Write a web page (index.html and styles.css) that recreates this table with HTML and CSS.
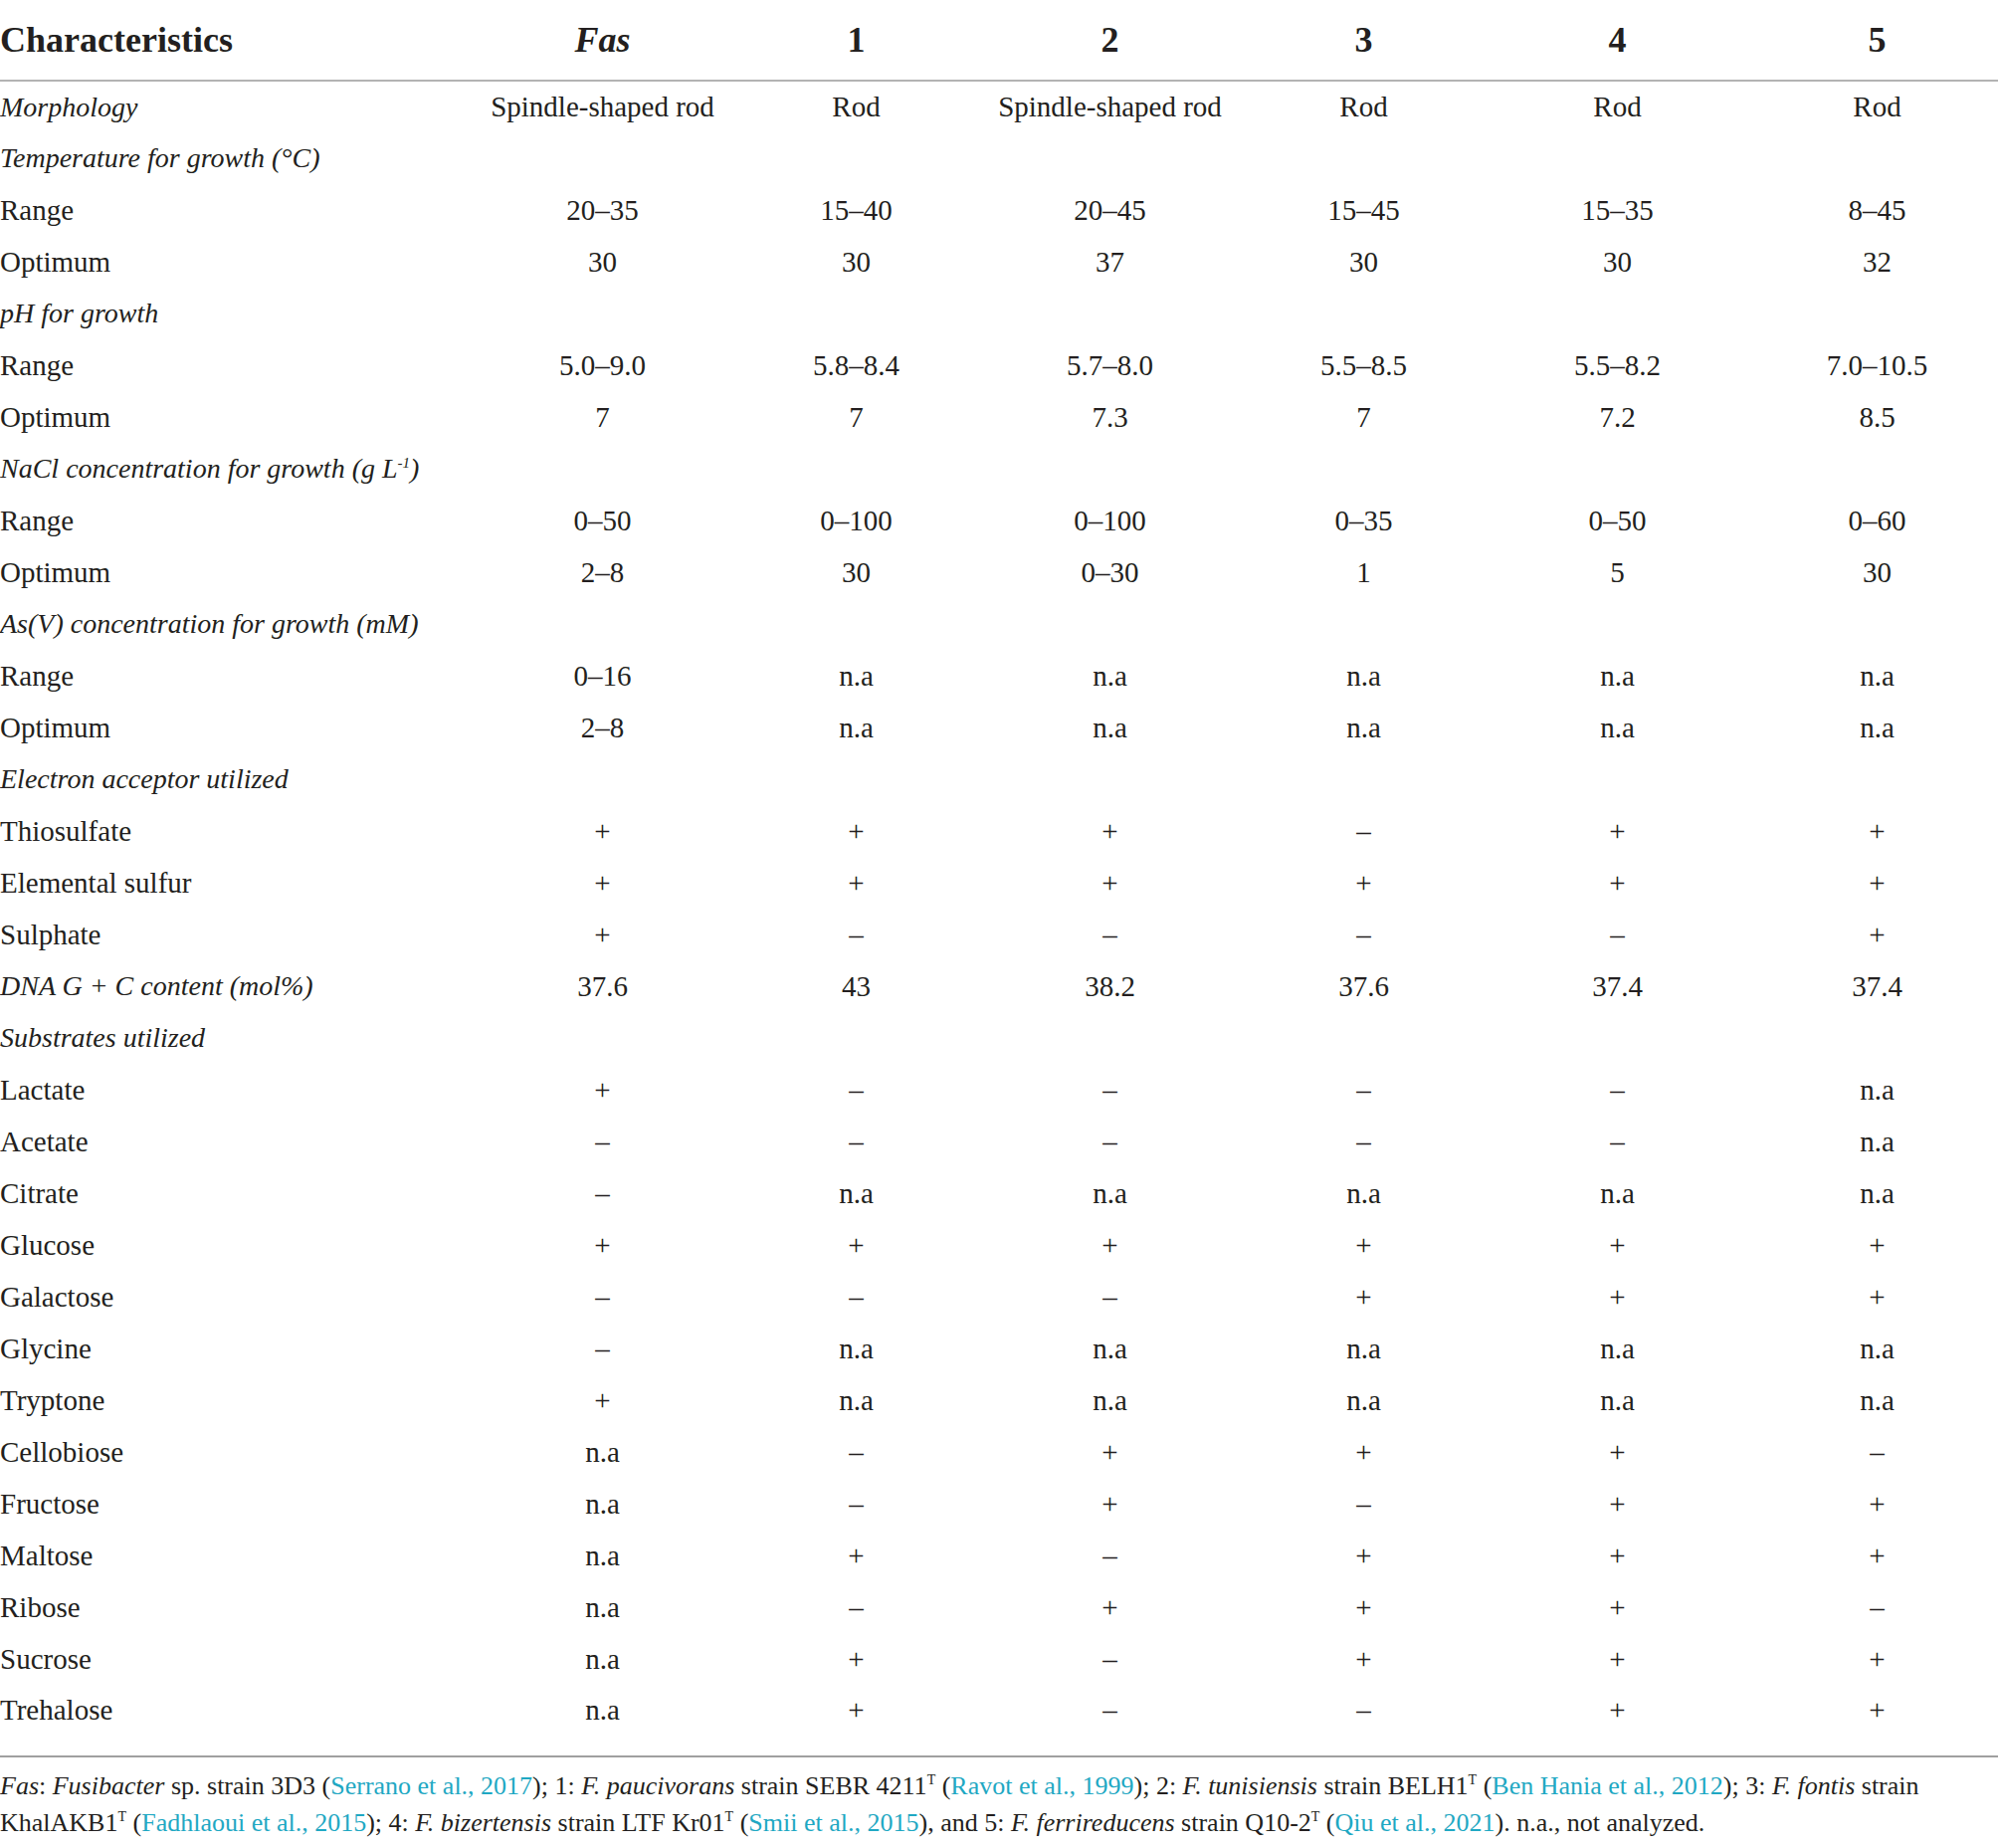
FILE: index.html
```html
<html>
<head>
  <title>Fusibacter characteristics</title>
  <link rel="stylesheet" href="styles.css">
</head>
<body>
  <table class="traits">
    <colgroup>
      <col class="col-label">
      <col class="col-val"><col class="col-val"><col class="col-val">
      <col class="col-val"><col class="col-val"><col class="col-val">
    </colgroup>
    <thead>
      <tr>
        <th class="label">Characteristics</th>
        <th><i>Fas</i></th>
        <th>1</th>
        <th>2</th>
        <th>3</th>
        <th>4</th>
        <th class="last">5</th>
      </tr>
    </thead>
    <tbody>
      <tr><td class="label group">Morphology</td><td>Spindle-shaped rod</td><td>Rod</td><td>Spindle-shaped rod</td><td>Rod</td><td>Rod</td><td class="last">Rod</td></tr>
      <tr><td class="label group">Temperature for growth (°C)</td><td></td><td></td><td></td><td></td><td></td><td class="last"></td></tr>
      <tr><td class="label">Range</td><td>20–35</td><td>15–40</td><td>20–45</td><td>15–45</td><td>15–35</td><td class="last">8–45</td></tr>
      <tr><td class="label">Optimum</td><td>30</td><td>30</td><td>37</td><td>30</td><td>30</td><td class="last">32</td></tr>
      <tr><td class="label group">pH for growth</td><td></td><td></td><td></td><td></td><td></td><td class="last"></td></tr>
      <tr><td class="label">Range</td><td>5.0–9.0</td><td>5.8–8.4</td><td>5.7–8.0</td><td>5.5–8.5</td><td>5.5–8.2</td><td class="last">7.0–10.5</td></tr>
      <tr><td class="label">Optimum</td><td>7</td><td>7</td><td>7.3</td><td>7</td><td>7.2</td><td class="last">8.5</td></tr>
      <tr><td class="label group">NaCl concentration for growth (g L<sup>-1</sup>)</td><td></td><td></td><td></td><td></td><td></td><td class="last"></td></tr>
      <tr><td class="label">Range</td><td>0–50</td><td>0–100</td><td>0–100</td><td>0–35</td><td>0–50</td><td class="last">0–60</td></tr>
      <tr><td class="label">Optimum</td><td>2–8</td><td>30</td><td>0–30</td><td>1</td><td>5</td><td class="last">30</td></tr>
      <tr><td class="label group">As(V) concentration for growth (mM)</td><td></td><td></td><td></td><td></td><td></td><td class="last"></td></tr>
      <tr><td class="label">Range</td><td>0–16</td><td>n.a</td><td>n.a</td><td>n.a</td><td>n.a</td><td class="last">n.a</td></tr>
      <tr><td class="label">Optimum</td><td>2–8</td><td>n.a</td><td>n.a</td><td>n.a</td><td>n.a</td><td class="last">n.a</td></tr>
      <tr><td class="label group">Electron acceptor utilized</td><td></td><td></td><td></td><td></td><td></td><td class="last"></td></tr>
      <tr><td class="label">Thiosulfate</td><td>+</td><td>+</td><td>+</td><td>–</td><td>+</td><td class="last">+</td></tr>
      <tr><td class="label">Elemental sulfur</td><td>+</td><td>+</td><td>+</td><td>+</td><td>+</td><td class="last">+</td></tr>
      <tr><td class="label">Sulphate</td><td>+</td><td>–</td><td>–</td><td>–</td><td>–</td><td class="last">+</td></tr>
      <tr><td class="label group">DNA G + C content (mol%)</td><td>37.6</td><td>43</td><td>38.2</td><td>37.6</td><td>37.4</td><td class="last">37.4</td></tr>
      <tr><td class="label group">Substrates utilized</td><td></td><td></td><td></td><td></td><td></td><td class="last"></td></tr>
      <tr><td class="label">Lactate</td><td>+</td><td>–</td><td>–</td><td>–</td><td>–</td><td class="last">n.a</td></tr>
      <tr><td class="label">Acetate</td><td>–</td><td>–</td><td>–</td><td>–</td><td>–</td><td class="last">n.a</td></tr>
      <tr><td class="label">Citrate</td><td>–</td><td>n.a</td><td>n.a</td><td>n.a</td><td>n.a</td><td class="last">n.a</td></tr>
      <tr><td class="label">Glucose</td><td>+</td><td>+</td><td>+</td><td>+</td><td>+</td><td class="last">+</td></tr>
      <tr><td class="label">Galactose</td><td>–</td><td>–</td><td>–</td><td>+</td><td>+</td><td class="last">+</td></tr>
      <tr><td class="label">Glycine</td><td>–</td><td>n.a</td><td>n.a</td><td>n.a</td><td>n.a</td><td class="last">n.a</td></tr>
      <tr><td class="label">Tryptone</td><td>+</td><td>n.a</td><td>n.a</td><td>n.a</td><td>n.a</td><td class="last">n.a</td></tr>
      <tr><td class="label">Cellobiose</td><td>n.a</td><td>–</td><td>+</td><td>+</td><td>+</td><td class="last">–</td></tr>
      <tr><td class="label">Fructose</td><td>n.a</td><td>–</td><td>+</td><td>–</td><td>+</td><td class="last">+</td></tr>
      <tr><td class="label">Maltose</td><td>n.a</td><td>+</td><td>–</td><td>+</td><td>+</td><td class="last">+</td></tr>
      <tr><td class="label">Ribose</td><td>n.a</td><td>–</td><td>+</td><td>+</td><td>+</td><td class="last">–</td></tr>
      <tr><td class="label">Sucrose</td><td>n.a</td><td>+</td><td>–</td><td>+</td><td>+</td><td class="last">+</td></tr>
      <tr class="end"><td class="label">Trehalose</td><td>n.a</td><td>+</td><td>–</td><td>–</td><td>+</td><td class="last">+</td></tr>
    </tbody>
  </table>

  <p class="note">
    <i>Fas</i>: <i>Fusibacter</i> sp. strain 3D3 (<a>Serrano et al., 2017</a>); 1: <i>F. paucivorans</i> strain SEBR 4211<sup>T</sup> (<a>Ravot et al., 1999</a>); 2: <i>F. tunisiensis</i> strain BELH1<sup>T</sup> (<a>Ben Hania et al., 2012</a>); 3: <i>F. fontis</i> strain<br>
    KhalAKB1<sup>T</sup> (<a>Fadhlaoui et al., 2015</a>); 4: <i>F. bizertensis</i> strain LTF Kr01<sup>T</sup> (<a>Smii et al., 2015</a>), and 5: <i>F. ferrireducens</i> strain Q10-2<sup>T</sup> (<a>Qiu et al., 2021</a>). n.a., not analyzed.
  </p>
</body>
</html>
```

FILE: styles.css
```css
body {
  margin: 0;
  background: #ffffff;
  color: #231f20;
  font-family: "Liberation Serif", "Times New Roman", serif;
}

.traits {
  width: 2008px;
  border-collapse: collapse;
  table-layout: fixed;
  font-size: 29px;
}

.col-label {
  width: 478px;
}

.col-val {
  width: 255px;
}

.traits th {
  height: 81px;
  padding: 0;
  font-size: 36px;
  font-weight: bold;
  text-align: center;
  border-bottom: 2px solid #b3b3b3;
}

.traits td {
  height: 52px;
  padding: 0;
  text-align: center;
  vertical-align: middle;
  white-space: nowrap;
}

.traits .label {
  text-align: left;
}

.traits .group {
  font-style: italic;
  font-size: 28px;
}

.traits .last {
  padding-left: 12px;
}

.traits .end td {
  height: 72px;
  padding-bottom: 20px;
  border-bottom: 2px solid #a0a0a0;
}

.traits sup {
  font-size: 15px;
  line-height: 0;
}

.note {
  margin: 10px 0 0 0;
  font-size: 26px;
  line-height: 37px;
  white-space: nowrap;
}

.note a {
  color: #1fa8c3;
}

.note sup {
  font-size: 14px;
  line-height: 0;
}
```
